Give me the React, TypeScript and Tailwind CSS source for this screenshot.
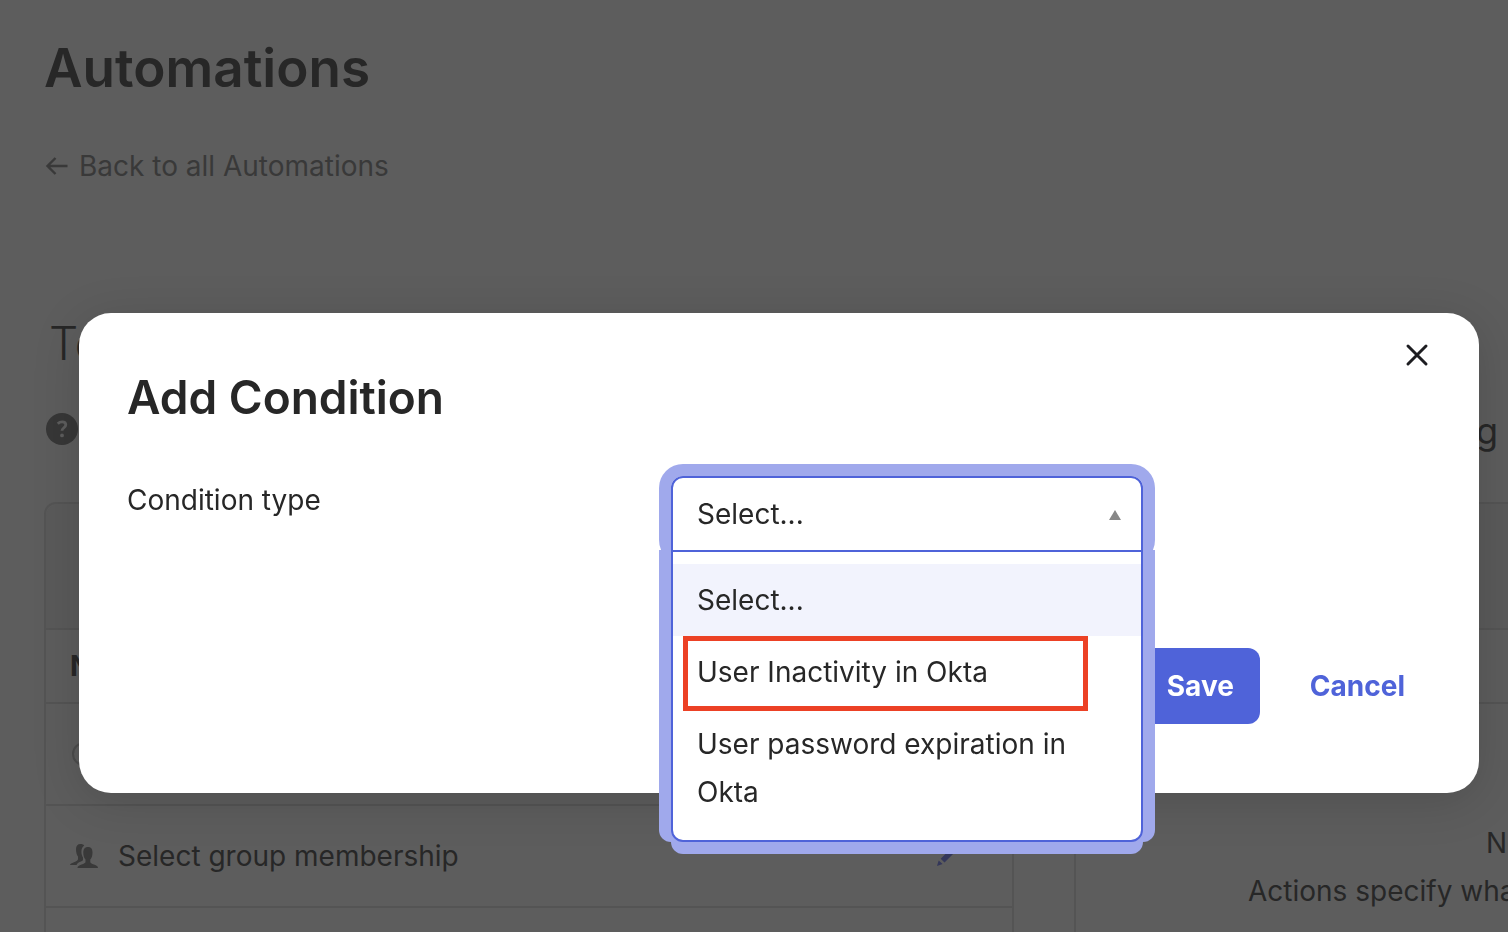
import { useState } from "react";

const OPTIONS = [
  { value: "", label: "Select..." },
  { value: "inactivity", label: "User Inactivity in Okta" },
  { value: "password", label: "User password expiration in Okta" },
];

function ArrowLeftIcon() {
  return (
    <svg width="24" height="24" viewBox="0 0 24 24" fill="none" aria-hidden="true">
      <path
        d="M23.5 12h-20M11.5 4l-8 8 8 8"
        stroke="currentColor"
        strokeWidth="2.4"
      />
    </svg>
  );
}

function HelpIcon() {
  return (
    <svg width="32" height="32" viewBox="0 0 32 32" aria-hidden="true">
      <circle cx="16" cy="16" r="16" fill="#373737" />
      <path
        d="M11.8 10.8c1.2-1.3 2.7-1.9 4.4-1.9 2.2 0 3.6 1.1 3.6 2.9 0 3-3.8 2.9-3.8 6"
        fill="none"
        stroke="#5d5d5d"
        strokeWidth="2.8"
      />
      <circle cx="16" cy="22.4" r="1.9" fill="#5d5d5d" />
    </svg>
  );
}

function GroupIcon() {
  return (
    <svg width="28" height="26" viewBox="0 0 28 26" fill="#393939" aria-hidden="true">
      <path d="M10.5 1C7.500 1 6 3 6 6c0 3.500.8 6 2 7.500v2.500c0 1.500-1.500 2.200-4 3.200C1.500 20 0 21 0 22h6.500c.8-2 2.500-2.800 4.500-3.500 1.200-.5 2-1 2-1.700v-2.300c-1-1.500-1.600-3.500-1.600-5.700 0-2.700.9-5 2.800-6.300C13.500 1.500 12.300 1 10.500 1z" />
      <path d="M18 4c-3.200 0-4.700 2.100-4.700 5.400 0 3.300.8 5.600 2.200 7.100v2.500c0 1-1.600 1.700-4 2.600C9 22.500 7.500 23.300 7.500 25H28c0-1.700-1.500-2.500-4-3.400-2.400-.9-3.700-1.600-3.700-2.600v-2.500c1.400-1.500 2.200-3.800 2.200-7.100C22.500 6.100 21.200 4 18 4z" />
    </svg>
  );
}

function PencilIcon() {
  return (
    <svg width="20" height="20" viewBox="0 0 20 20" fill="#34375a" aria-hidden="true">
      <path d="M0 20l1.700-5.500 3.900 3.600zM3.700 12.800l9.500-9.500 3.800 3.800-9.500 9.500zM14.300 2.300 16 .6l3.700 3.700L18 6z" />
    </svg>
  );
}

function CloseIcon() {
  return (
    <svg width="24" height="24" viewBox="0 0 24 24" fill="none" aria-hidden="true">
      <path
        d="M3 3 21 21M21 3 3 21"
        stroke="#1d1d21"
        strokeWidth="3"
        strokeLinecap="round"
      />
    </svg>
  );
}

function AutomationPage() {
  return (
    <main className="pt-[36px] pl-[44px]">
      <h1 className="text-[53px] leading-[64px] font-semibold">Automations</h1>
      <a
        href="#automations"
        className="mt-[42px] flex w-fit items-center gap-[11px] text-[#393939]"
      >
        <ArrowLeftIcon />
        Back to all Automations
      </a>

      <h2 className="mt-[125px] pl-[5px] text-[46px] leading-[56px] font-light">
        Test
      </h2>
      <div className="mt-[34px] flex items-start justify-between pr-[10px] pl-[2px]">
        <button type="button" aria-label="Help" className="mt-2">
          <HelpIcon />
        </button>
        <p className="text-[36px] leading-[52px]">Editing</p>
      </div>

      <div className="mt-[45px] flex gap-[60px]">
        <section className="w-[970px] shrink-0 rounded-t-xl border-2 border-[#545454]">
          <div className="h-[126px] rounded-t-xl border-b-2 border-[#545454] bg-[#5a5a5a]" />
          <table className="w-full">
            <thead>
              <tr className="h-[73px] border-b-2 border-[#545454]">
                <th colSpan={3} className="pl-6 text-left font-bold">
                  Name
                </th>
              </tr>
            </thead>
            <tbody>
              <tr className="h-[102px] border-b-2 border-[#545454]">
                <td className="w-12 pl-[26px]">
                  <span className="block size-6 rounded-full border-2 border-[#4c4c4c]" />
                </td>
                <td />
                <td />
              </tr>
              <tr className="h-[102px] border-b-2 border-[#545454]">
                <td className="w-12 pl-6">
                  <GroupIcon />
                </td>
                <td className="pl-5">Select group membership</td>
                <td className="w-[75px]">
                  <button type="button" aria-label="Edit group membership" className="block">
                    <PencilIcon />
                  </button>
                </td>
              </tr>
              <tr className="h-[102px]">
                <td colSpan={3} />
              </tr>
            </tbody>
          </table>
        </section>

        <section className="w-[970px] shrink-0 rounded-t-xl border-2 border-[#545454]">
          <div className="h-[126px] rounded-t-xl border-b-2 border-[#545454] bg-[#5a5a5a]" />
          <div className="h-[74px] border-b-2 border-[#545454]" />
          <div className="pt-[115px] pl-[172px] whitespace-nowrap">
            <p className="pl-[238px]">No Actions</p>
            <p>Actions specify what happens</p>
          </div>
        </section>
      </div>
    </main>
  );
}

function ConditionSelect() {
  const [value, setValue] = useState("");

  return (
    <div className="relative z-10 w-[472px] rounded-xl shadow-[0_0_0_12px_#a0a9ec]">
      <select
        id="condition-type"
        value={value}
        onChange={(e) => setValue(e.target.value)}
        className="block h-[76px] w-full appearance-none rounded-t-xl border-2 border-[#4f63d9] bg-white px-6 outline-none"
      >
        {OPTIONS.map((option) => (
          <option key={option.value} value={option.value}>
            {option.label}
          </option>
        ))}
      </select>
      <svg
        width="12"
        height="10"
        viewBox="0 0 12 10"
        aria-hidden="true"
        className="pointer-events-none absolute top-[34px] right-[22px]"
      >
        <path d="M6 0l6 10H0z" fill="#888" />
      </svg>

      <ul
        role="listbox"
        aria-label="Condition type"
        className="absolute top-[74px] left-0 w-full rounded-b-xl border-2 border-[#4f63d9] bg-white py-3 shadow-[-12px_0_0_#a0a9ec,12px_0_0_#a0a9ec,0_12px_0_#a0a9ec]"
      >
        {OPTIONS.map((option) => (
          <li
            key={option.value}
            role="option"
            aria-selected={option.value === value}
            onClick={() => setValue(option.value)}
            className="relative px-6 py-3 aria-selected:bg-[#f2f3fd]"
          >
            {option.label}
            {option.value === "inactivity" && (
              <span className="absolute top-0 left-[10px] h-[75px] w-[405px] border-5 border-[#ec4125]" />
            )}
          </li>
        ))}
      </ul>
    </div>
  );
}

function AddConditionDialog() {
  return (
    <div className="fixed inset-0 pt-[313px] pr-[29px] pl-[79px]">
      <form
        role="dialog"
        aria-labelledby="dialog-title"
        onSubmit={(e) => e.preventDefault()}
        className="rounded-[32px] bg-white px-12 pt-[18px] pb-[69px] text-[#272727] shadow-[0_8px_48px_rgba(0,0,0,0.15)]"
      >
        <div className="flex items-start justify-between">
          <h2
            id="dialog-title"
            className="pt-[38px] text-[46px] leading-[56px] font-semibold"
          >
            Add Condition
          </h2>
          <button
            type="button"
            aria-label="Close"
            className="-mr-[10px] flex size-12 items-center justify-center"
          >
            <CloseIcon />
          </button>
        </div>

        <div className="mt-[51px] flex items-start">
          <label htmlFor="condition-type" className="w-[544px]">
            Condition type
          </label>
          <ConditionSelect />
        </div>

        <div className="mt-24 flex justify-end gap-6 font-bold">
          <button
            type="submit"
            className="h-[76px] rounded-xl bg-[#4f63d9] px-[26px] text-white"
          >
            Save
          </button>
          <button type="button" className="h-[76px] px-[26px] text-[#4f63d9]">
            Cancel
          </button>
        </div>
      </form>
    </div>
  );
}

export default function App() {
  return (
    <div className="h-screen overflow-hidden bg-[#5d5d5d] font-['Inter',sans-serif] text-[28px] leading-[48px] text-[#272727]">
      <AutomationPage />
      <AddConditionDialog />
    </div>
  );
}
